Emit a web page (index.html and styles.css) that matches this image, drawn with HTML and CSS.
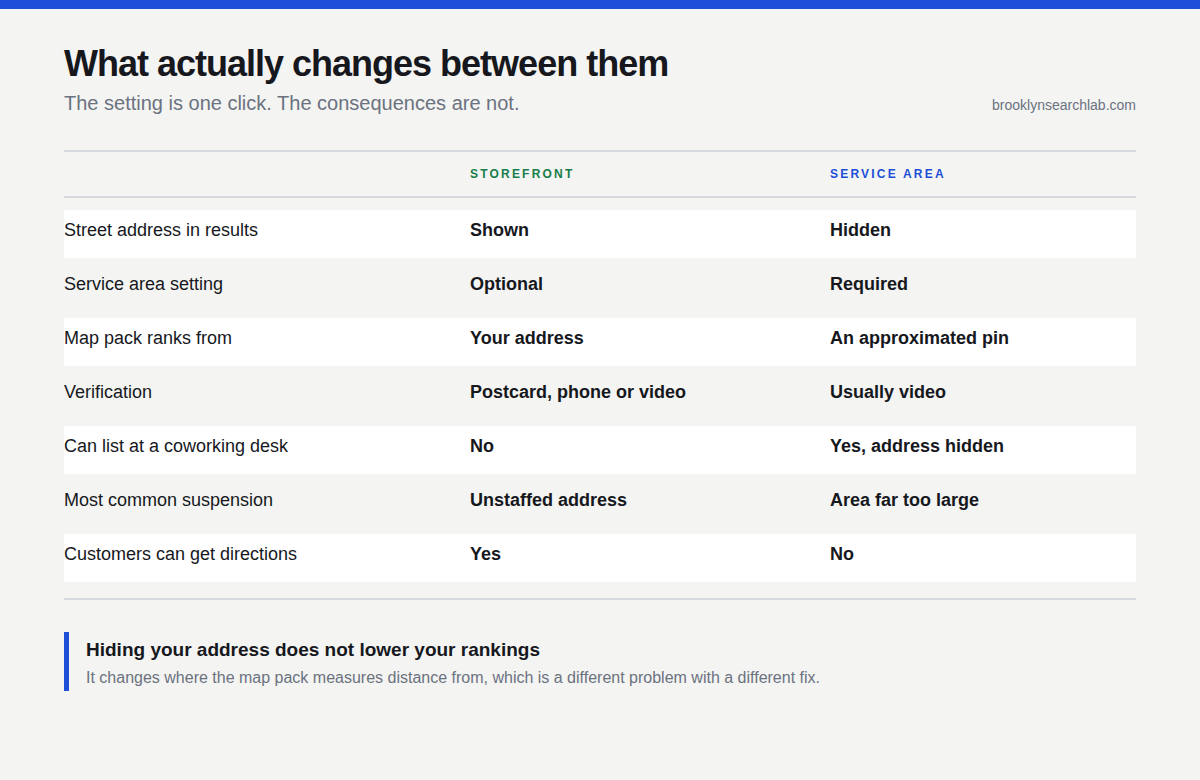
FILE: index.html
```html
<!DOCTYPE html>
<html lang="en">
<head>
<meta charset="utf-8">
<title>What actually changes between them</title>
<link rel="stylesheet" href="styles.css">
</head>
<body>
<div class="topbar"></div>
<main class="page">
  <header class="head">
    <h1 class="title">What actually changes between them</h1>
    <div class="subrow">
      <p class="subtitle">The setting is one click. The consequences are not.</p>
      <span class="domain">brooklynsearchlab.com</span>
    </div>
  </header>

  <section class="table">
    <div class="thead">
      <div class="c1"></div>
      <div class="c2 label green">Storefront</div>
      <div class="c3 label blue">Service area</div>
    </div>
    <div class="tbody">
      <div class="row alt"><div class="c1">Street address in results</div><div class="c2 val">Shown</div><div class="c3 val">Hidden</div></div>
      <div class="row"><div class="c1">Service area setting</div><div class="c2 val">Optional</div><div class="c3 val">Required</div></div>
      <div class="row alt"><div class="c1">Map pack ranks from</div><div class="c2 val">Your address</div><div class="c3 val">An approximated pin</div></div>
      <div class="row"><div class="c1">Verification</div><div class="c2 val">Postcard, phone or video</div><div class="c3 val">Usually video</div></div>
      <div class="row alt"><div class="c1">Can list at a coworking desk</div><div class="c2 val">No</div><div class="c3 val">Yes, address hidden</div></div>
      <div class="row"><div class="c1">Most common suspension</div><div class="c2 val">Unstaffed address</div><div class="c3 val">Area far too large</div></div>
      <div class="row alt"><div class="c1">Customers can get directions</div><div class="c2 val">Yes</div><div class="c3 val">No</div></div>
    </div>
  </section>

  <aside class="note">
    <h2 class="note-title">Hiding your address does not lower your rankings</h2>
    <p class="note-text">It changes where the map pack measures distance from, which is a different problem with a different fix.</p>
  </aside>
</main>
</body>
</html>
```
FILE: styles.css
```css
* { box-sizing: border-box; }
html, body { margin: 0; padding: 0; }
body {
  background: #f4f4f2;
  font-family: "Liberation Sans", Arial, sans-serif;
  color: #16181d;
  width: 1200px;
  height: 780px;
  overflow: hidden;
}
.topbar { height: 9px; background: #1d4fd8; }
.page { padding: 0 64px; }
.head { padding-top: 33px; }
.title {
  margin: 0;
  font-size: 36px;
  line-height: 44px;
  font-weight: 700;
  letter-spacing: -1px;
}
.subrow {
  display: flex;
  justify-content: space-between;
  align-items: baseline;
  margin-top: 3px;
}
.subtitle {
  margin: 0;
  font-size: 20px;
  line-height: 28px;
  color: #6b7280;
}
.domain { font-size: 14px; color: #6b7280; }

.table { margin-top: 33px; }
.thead {
  display: flex;
  border-top: 2px solid #d5d9dd;
  border-bottom: 2px solid #d5d9dd;
  padding: 15px 0;
}
.c1 { width: 406px; }
.c2 { width: 360px; }
.c3 { flex: 1; }
.label {
  font-size: 12px;
  line-height: 14px;
  font-weight: 700;
  letter-spacing: 2.2px;
  text-transform: uppercase;
}
.green { color: #177d4a; }
.blue { color: #1d4fd8; }
.tbody {
  display: flex;
  flex-direction: column;
  gap: 6px;
  padding: 12px 0 16px;
  border-bottom: 2px solid #d5d9dd;
}
.row {
  display: flex;
  height: 48px;
  padding-top: 8px;
  font-size: 18px;
  line-height: 24px;
}
.row.alt { background: #ffffff; }
.val { font-weight: 700; }

.note {
  margin-top: 32px;
  border-left: 5px solid #1d4fd8;
  padding: 6px 0 2px 17px;
}
.note-title {
  margin: 0;
  font-size: 19px;
  line-height: 24px;
  font-weight: 700;
}
.note-text {
  margin: 5px 0 0;
  font-size: 16px;
  line-height: 22px;
  color: #6b7280;
}
```
